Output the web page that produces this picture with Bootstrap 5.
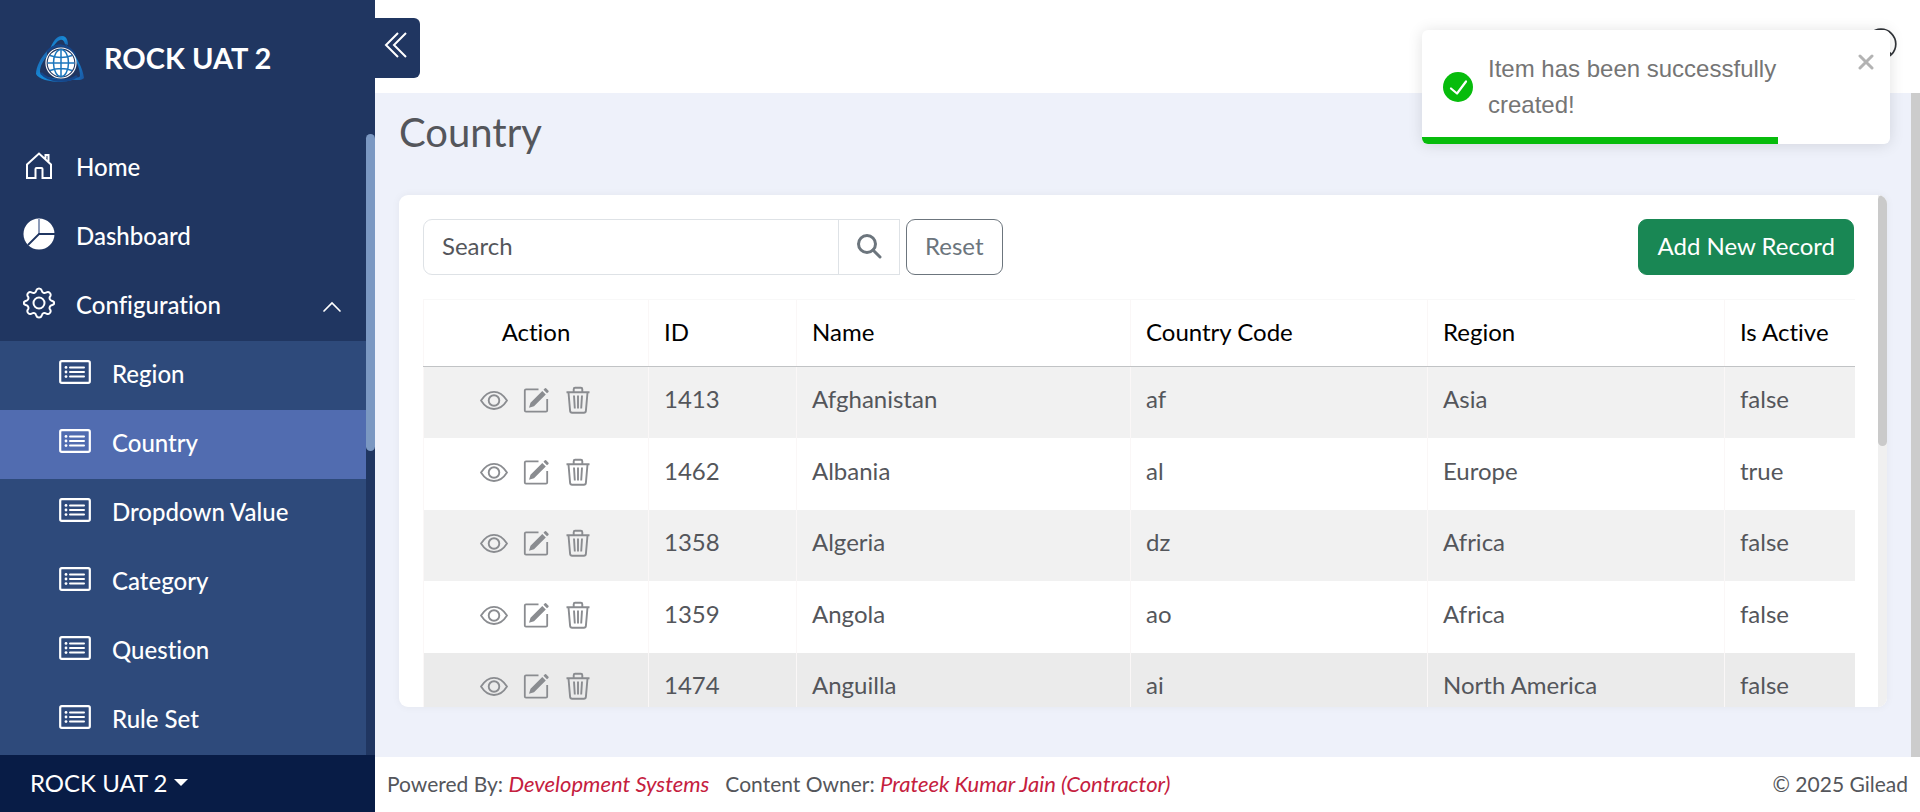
<!DOCTYPE html>
<html lang="en">
<head>
<meta charset="utf-8">
<meta name="viewport" content="width=device-width, initial-scale=1">
<title>Country - ROCK UAT 2</title>
<link href="https://cdn.jsdelivr.net/npm/bootstrap@5.3.0/dist/css/bootstrap.min.css" rel="stylesheet">
<style>
body{font-family:Lato,"Open Sans",sans-serif;font-size:24px;line-height:36px;color:#54565b;background:#eef1fa;font-variant-ligatures:none}
.sidebar{width:375px;background:#203661;color:#fff}
.brand{height:134px;padding:0 0 16px 35px;gap:19px;font-size:29px;font-weight:700}
.brand span{padding-bottom:3px}
.side-link{height:69px;padding:0 24px 3px 23px;gap:21px;color:#fff;text-decoration:none;font-weight:500}
.side-link svg{margin-bottom:4px}
.side-link .bi-caret{margin:4px 0 0}
.side-sub{background:#2e4a7b}
.side-sub .side-link{padding-left:59px}
.side-sub .active{background:#516cb0}
.bar-track{width:9px}
.bar-thumb{border-radius:5px}
.side-thumb{height:51%;background:#7b98c2}
.side-foot{height:57px;background:#081c46;padding:0 0 1px 30px}
.side-foot button{font-size:24px;color:#fff}
.topbar{height:93px;background:#fff}
.toggle{width:45px;height:60px;margin-top:18px;padding:0 6px 7px 8px;background:#203661;border:0;border-radius:0 6px 6px 0}
.user-btn{margin:0 23px 5px 0}
.page-title{font-size:40px;line-height:48px;font-weight:400;margin-bottom:39px}
.main-area{padding:15px 24px 50px 24px}
.page-track{background:#ccc}
.panel{border-radius:9px;box-shadow:0 0 8px rgba(0,0,0,.05)}
.panel-body{padding:24px 24px 0}
.grey-track{background:#f0f0f0}
.panel-thumb{height:49%;background:#cacaca}
.search-box{width:477px;margin-right:6px}
.search-box .form-control,.search-box .btn,.tool-btn{height:56px;font-size:24px;border-radius:9px}
.search-box .form-control{padding:0 18px 3px;border-color:#dee2e6;color:#54565b}
.search-box .form-control::placeholder{color:#54565b}
.search-box .btn{width:62px;border-color:#dee2e6;border-radius:0!important;padding:0 0 8px}
.tool-btn{padding:0 18px 3px}
.grid-table{table-layout:fixed;border-collapse:collapse;color:#54565b;--bs-table-color:#54565b}
.grid-table>:not(caption)>*>*{padding:0 15px;border:0 solid #faf7f7;border-width:0 0 0 1px;box-shadow:none}
.grid-table th{height:67px;font-weight:400;color:#000}
.grid-table thead{border-top:1px solid #f8f8f8}
.grid-table>thead>tr>th{border-bottom:1px solid #c1c3c5;padding-bottom:16px;vertical-align:bottom}
.grid-table td{height:71px;vertical-align:middle}
.grid-table>tbody>tr>td{padding-bottom:6px;background:#fff}
.grid-table>tbody>tr>td:first-child{padding-bottom:4px}
.grid-table>tbody>tr:nth-child(odd)>td{background:#f1f1f1}
.grid-table>tbody>tr:nth-child(even)>td{height:72px}
.grid-table>tbody>tr.current>td{background:#ebebeb}
.w-act{width:225px}.w-id{width:148px}.w-name{width:334px}.w-mid{width:297px}.w-flag{width:130px}
.row-icons{gap:14px}
.row-icon{width:28px;height:28px}
.foot{height:55px;background:#fff;font-size:21px;padding:0 12px 1px}
.foot a{color:#c5203e;font-size:22px;font-style:italic;text-decoration:none}
.note{top:30px;right:30px;width:468px;height:114px;background:#fff;border-radius:6px;overflow:hidden;padding:0 24px 0 21px;gap:15px;color:#757575;font-family:"Liberation Sans",sans-serif;z-index:20;box-shadow:0 1px 15px rgba(0,0,0,.12)}
.note-x{top:23px;right:16px}
.note-bar{height:7px;background:#07bc0c}
</style>
</head>
<body class="vh-100 overflow-hidden">
<svg class="d-none" aria-hidden="true">
<symbol id="i-list" viewBox="0 0 16 16"><rect x=".6" y="2.600" width="14.800" height="10.800" rx=".8" fill="none" stroke="currentColor" stroke-width="1.100"/><path d="M5.500 5.700h7M5.500 8h7M5.500 10.300h7" stroke="currentColor" stroke-width="1" stroke-linecap="round"/><circle cx="3.500" cy="5.700" r=".7" fill="currentColor"/><circle cx="3.500" cy="8" r=".7" fill="currentColor"/><circle cx="3.500" cy="10.300" r=".7" fill="currentColor"/></symbol>
<symbol id="i-eye" viewBox="0 0 28 28"><path d="M1 14.500C4.500 9 9 5.800 14 5.800S23.500 9 27 14.500C23.500 20 19 23 14 23S4.500 20 1 14.500z" fill="none" stroke="#8a8c90" stroke-width="1.800"/><circle cx="14" cy="14.500" r="5.300" fill="none" stroke="#8a8c90" stroke-width="1.900"/></symbol>
<symbol id="i-edit" viewBox="0 0 28 28"><path d="M16.500 3.300H4Q2.800 3.300 2.800 4.500v20Q2.800 25.700 4 25.700h20q1.200 0 1.200-1.200V13" fill="none" stroke="#8a8c90" stroke-width="1.800"/><path d="M7 21.700l1.500-5L20.300 4.900l3.500 3.500L12 20.200z M21.500 3.700l1.400-1.400q.6-.5 1.200 0l2.400 2.400q.4.600 0 1.200L25 7.200z" fill="#8a8c90"/></symbol>
<symbol id="i-trash" viewBox="0 0 28 28"><path d="M2.500 6.200h23M4.500 6.500l1.600 18.300q.2 1.900 2 1.900h11.800q1.800 0 2-1.900L23.500 6.500M9.700 6V3.200q0-1.400 1.400-1.400h5.800q1.400 0 1.400 1.400V6M10 9.500l.8 13M14 9.500v13M18 9.500l-.8 13" fill="none" stroke="#8a8c90" stroke-width="1.900"/></symbol>
</svg>
<div class="d-flex h-100">
  <aside class="sidebar d-flex flex-column flex-shrink-0">
    <div class="brand d-flex align-items-center flex-shrink-0">
      <svg width="50" height="50" viewBox="0 0 50 50" aria-hidden="true">
        <defs><linearGradient id="ring" x1="0" y1="0" x2="1" y2="1"><stop offset="0" stop-color="#1c5ea8"/><stop offset=".5" stop-color="#168bd8"/><stop offset="1" stop-color="#1a55a0"/></linearGradient></defs>
        <path d="M15 15C18 7 22 1 28 2c4 1 5 5 5 9l-3-1c-1-4-3-5-5-4-3 1-5 4-8 8z" fill="url(#ring)"/>
        <path d="M28 3c1 5 3 9 7 12 6 7 13 19 14 29-1 2-7 3-13 1 4-1 8-1 9-3C45 33 40 23 35 17 31 12 29 8 28 3z" fill="url(#ring)"/>
        <path d="M12 17C6 23 1 33 1 40c2 5 14 8 25 8 8-1 13-2 18-5-7 1-11 3-20 2C15 44 6 42 5 38c0-6 3-11 7-16z" fill="url(#ring)"/>
        <path d="M12 18c8-9 21-9 28 3M6 39c8 9 26 10 36 3" fill="none" stroke="#15468a" stroke-width="2.500"/>
        <circle cx="26" cy="29" r="15" fill="#203661" stroke="#fff" stroke-width="1.200"/><circle cx="26" cy="29" r="13.300" fill="#fff"/>
        <g fill="none" stroke="#1b76bd" stroke-width="1.500"><path d="M26 15.500v27M12.500 29h27M15 21.500q11 4 22 0M15 36.500q11-4 22 0"/><ellipse cx="26" cy="29" rx="7.500" ry="13.500"/></g>
      </svg>
      <span>ROCK UAT 2</span>
    </div>
    <div class="d-flex flex-grow-1 overflow-hidden">
      <nav class="flex-grow-1" aria-label="Main">
        <a class="side-link d-flex align-items-center" href="#"><svg width="32" height="32" viewBox="0 0 32 32" fill="none" stroke="#fff" stroke-width="2"><path d="M4 15.500v13.500h8.500v-9q0-1 1-1h5q1 0 1 1v9H28V15.500L16 4.500zM22.500 9.500V6h3v6.500"/></svg>Home</a>
        <a class="side-link d-flex align-items-center" href="#"><svg width="32" height="32" viewBox="0 0 32 32"><circle cx="16" cy="16" r="15.500" fill="#fff"/><path d="M16 0v16" stroke="#8d9bb8" stroke-width="2"/><path d="M32 16H16L5 27" fill="none" stroke="#203661" stroke-width="1.800"/></svg>Dashboard</a>
        <a class="side-link d-flex align-items-center" href="#" aria-expanded="true"><svg width="32" height="32" viewBox="0 0 32 32" fill="none" stroke="#fff" stroke-width="2"><circle cx="16" cy="16" r="5.500"/><path d="M13.300 3.400c.8-2.600 4.600-2.600 5.400 0l.2.600a2.800 2.800 0 0 0 4 1.700l.6-.3c2.400-1.300 5 1.300 3.800 3.800l-.4.600a2.800 2.800 0 0 0 1.700 4l.7.200c2.600.8 2.600 3.200 0 4l-.7.200a2.800 2.800 0 0 0-1.700 4l.4.600c1.200 2.500-1.400 5.100-3.800 3.800l-.6-.3a2.800 2.800 0 0 0-4 1.700l-.2.600c-.8 2.600-4.600 2.600-5.400 0l-.2-.6a2.800 2.800 0 0 0-4-1.700l-.6.300c-2.400 1.300-5-1.300-3.800-3.800l.4-.6a2.800 2.800 0 0 0-1.700-4l-.7-.2c-2.600-.8-2.600-3.200 0-4l.7-.2a2.800 2.800 0 0 0 1.700-4l-.4-.6C3.500 6.700 6.100 4.100 8.500 5.400l.6.300a2.800 2.800 0 0 0 4-1.700z"/></svg>Configuration<svg class="bi-caret ms-auto" width="20" height="12" viewBox="0 0 20 12"><path d="M2 10l8-8 8 8" fill="none" stroke="#fff" stroke-width="1.700" stroke-linecap="round"/></svg></a>
        <div class="side-sub">
          <a class="side-link d-flex align-items-center" href="#"><svg width="32" height="32"><use href="#i-list"/></svg>Region</a>
          <a class="side-link active d-flex align-items-center" href="#" aria-current="page"><svg width="32" height="32"><use href="#i-list"/></svg>Country</a>
          <a class="side-link d-flex align-items-center" href="#"><svg width="32" height="32"><use href="#i-list"/></svg>Dropdown Value</a>
          <a class="side-link d-flex align-items-center" href="#"><svg width="32" height="32"><use href="#i-list"/></svg>Category</a>
          <a class="side-link d-flex align-items-center" href="#"><svg width="32" height="32"><use href="#i-list"/></svg>Question</a>
          <a class="side-link d-flex align-items-center" href="#"><svg width="32" height="32"><use href="#i-list"/></svg>Rule Set</a>
        </div>
      </nav>
      <div class="bar-track"><div class="bar-thumb side-thumb"></div></div>
    </div>
    <div class="side-foot d-flex align-items-center flex-shrink-0"><button class="btn p-0 border-0 dropdown-toggle" type="button">ROCK UAT 2</button></div>
  </aside>
  <div class="d-flex flex-column flex-grow-1 overflow-hidden">
    <header class="topbar d-flex justify-content-between flex-shrink-0">
      <button class="toggle d-flex align-items-center" type="button" aria-label="Collapse menu"><svg width="26" height="28" viewBox="0 0 26 28"><path d="M15 2L3 14l12 12M23 2L11 14l12 12" fill="none" stroke="#fff" stroke-width="2"/></svg></button>
      <button class="user-btn btn p-0 border-0 align-self-center" type="button" aria-label="Account"><svg class="d-block" width="32" height="32" viewBox="0 0 32 32" fill="none" stroke="#303338" stroke-width="1.700"><circle cx="16" cy="16" r="14.800"/><circle cx="16" cy="12" r="5"/><path d="M6 26q10-12 20 0"/></svg></button>
    </header>
    <div class="d-flex flex-grow-1 overflow-hidden">
      <main class="main-area d-flex flex-column flex-grow-1 overflow-hidden">
        <h1 class="page-title">Country</h1>
        <section class="panel bg-white d-flex flex-grow-1 overflow-hidden">
          <div class="panel-body flex-grow-1 overflow-hidden">
            <div class="d-flex mb-4">
              <form class="search-box input-group flex-nowrap">
                <input class="form-control" type="search" placeholder="Search" aria-label="Search">
                <button class="btn btn-outline-secondary" type="button" aria-label="Search"><svg width="26" height="26" viewBox="0 0 26 26" fill="none" stroke="#6c757d" stroke-width="3"><circle cx="11" cy="11" r="8.500"/><path d="M17 17l7 7" stroke-linecap="round"/></svg></button>
              </form>
              <button class="tool-btn btn btn-outline-secondary" type="button">Reset</button>
              <button class="tool-btn btn btn-success ms-auto" type="button">Add New Record</button>
            </div>
            <table class="grid-table table mb-0">
              <colgroup><col class="w-act"><col class="w-id"><col class="w-name"><col class="w-mid"><col class="w-mid"><col class="w-flag"></colgroup>
              <thead><tr><th class="text-center">Action</th><th>ID</th><th>Name</th><th>Country Code</th><th>Region</th><th>Is Active</th></tr></thead>
              <tbody id="rows"></tbody>
            </table>
          </div>
          <div class="bar-track grey-track flex-shrink-0"><div class="bar-thumb panel-thumb"></div></div>
        </section>
      </main>
      <div class="bar-track page-track flex-shrink-0"></div>
    </div>
    <footer class="foot d-flex align-items-center flex-shrink-0">
      <span class="me-3">Powered By: <a href="#">Development Systems</a></span>
      <span>Content Owner: <a href="#">Prateek Kumar Jain (Contractor)</a></span>
      <span class="ms-auto">© 2025 Gilead</span>
    </footer>
  </div>
</div>
<div class="note position-absolute d-flex align-items-center" role="alert">
  <svg class="flex-shrink-0" width="30" height="30" viewBox="0 0 30 30"><circle cx="15" cy="15" r="15" fill="#07bc0c"/><path d="M8 16.500l6 5 9-12" fill="none" stroke="#fff" stroke-width="2.200" stroke-linecap="round" stroke-linejoin="round"/></svg>
  <div class="pe-5">Item has been successfully created!</div>
  <button class="note-x btn p-0 border-0 position-absolute d-flex" type="button" aria-label="Close"><svg width="16" height="18" viewBox="0 0 16 18"><path d="M2 3l12 12M14 3L2 15" stroke="#b3b3b3" stroke-width="3" stroke-linecap="round"/></svg></button>
  <div class="note-bar position-absolute bottom-0 start-0" style="width:76%"></div>
</div>
<script src="https://cdn.jsdelivr.net/npm/bootstrap@5.3.0/dist/js/bootstrap.bundle.min.js"></script>
<script>
const countries = [
  [1413, "Afghanistan", "af", "Asia", "false"],
  [1462, "Albania", "al", "Europe", "true"],
  [1358, "Algeria", "dz", "Africa", "false"],
  [1359, "Angola", "ao", "Africa", "false"],
  [1474, "Anguilla", "ai", "North America", "false"]
];
const action = (icon, label) => `<button class="btn p-0 border-0 d-flex" type="button" aria-label="${label}"><svg class="row-icon"><use href="#i-${icon}"/></svg></button>`;
document.getElementById("rows").innerHTML = countries.map((c, i) =>
  `<tr${i === 4 ? ' class="current"' : ""}><td><div class="row-icons d-flex justify-content-center">${action("eye", "View")}${action("edit", "Edit")}${action("trash", "Delete")}</div></td>${c.map(v => `<td>${v}</td>`).join("")}</tr>`).join("");
</script>
</body>
</html>
